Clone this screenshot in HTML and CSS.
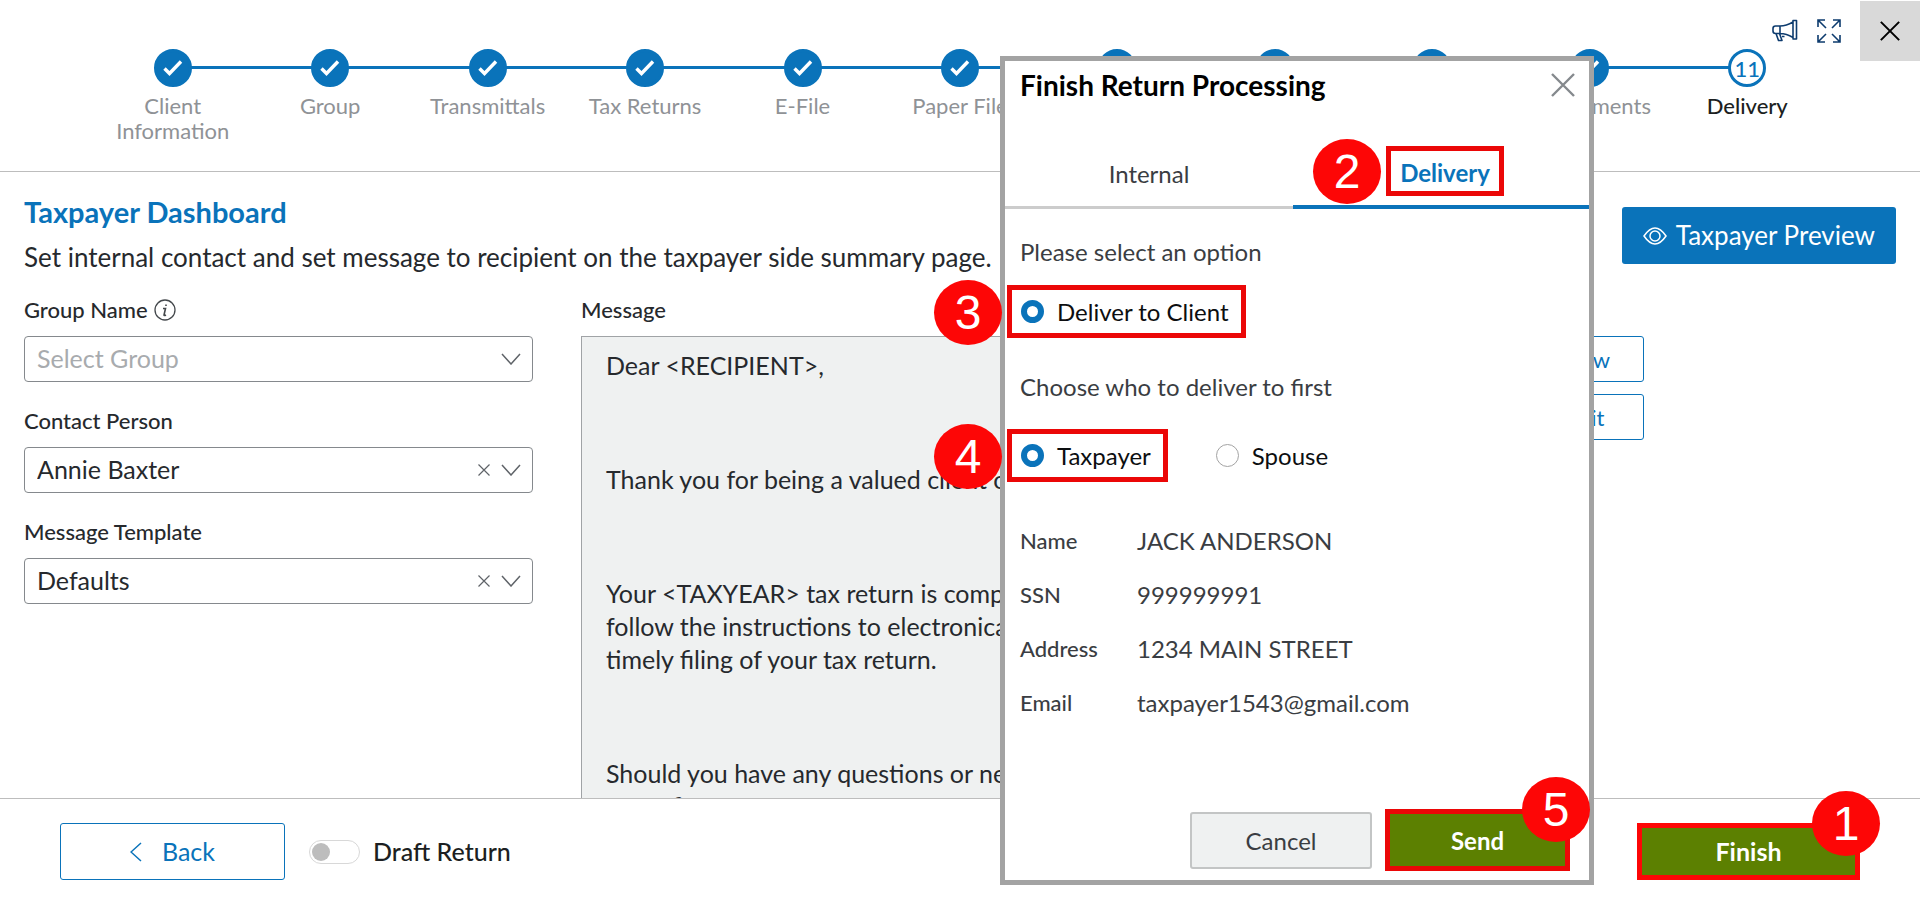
FILE: index.html
```
<!DOCTYPE html>
<html lang="en">
<head>
    <meta charset="UTF-8">
    <title>Delivery</title>
    <link rel="stylesheet" href="styles.css">
</head>
<body>
    <!-- shared icons -->
    <svg class="defs" width="0" height="0">
        <symbol id="check" viewBox="0 0 20 16"><path d="M1.500 8.500l5 5L18 1.500" fill="none" stroke="#fff" stroke-width="3.400"/></symbol>
        <symbol id="down" viewBox="0 0 20 12"><path d="M1 1l9 10 9-10" fill="none" stroke="#5f6368" stroke-width="1.5"/></symbol>
        <symbol id="cross" viewBox="0 0 24 24"><path d="M1 1l22 22M23 1L1 23" fill="none" stroke="currentColor" stroke-width="2.400"/></symbol>
    </svg>

    <header class="top">
        <ol class="steps">
            <li class="step"><span class="dot"><svg><use href="#check"/></svg></span><span class="name">Client Information</span></li>
            <li class="step"><span class="dot"><svg><use href="#check"/></svg></span><span class="name">Group</span></li>
            <li class="step"><span class="dot"><svg><use href="#check"/></svg></span><span class="name">Transmittals</span></li>
            <li class="step"><span class="dot"><svg><use href="#check"/></svg></span><span class="name">Tax Returns</span></li>
            <li class="step"><span class="dot"><svg><use href="#check"/></svg></span><span class="name">E-File</span></li>
            <li class="step"><span class="dot"><svg><use href="#check"/></svg></span><span class="name">Paper File</span></li>
            <li class="step"><span class="dot"><svg><use href="#check"/></svg></span></li>
            <li class="step"><span class="dot"><svg><use href="#check"/></svg></span></li>
            <li class="step"><span class="dot"><svg><use href="#check"/></svg></span></li>
            <li class="step"><span class="dot"><svg><use href="#check"/></svg></span><span class="name">Attachments</span></li>
            <li class="step current"><span class="dot">11</span><span class="name">Delivery</span></li>
        </ol>
        <div class="tools">
            <button class="tool" type="button" aria-label="Announcements">
                <svg width="26" height="24" viewBox="0 0 26 24" fill="none" stroke="#0d3b6e" stroke-width="1.6" stroke-linejoin="round">
                    <path d="M21 1.500h3.500v18.500H21zM21 3C16 6 13 7 8 7v7.500c5 0 8 1 13 4M8 7H3.500Q1 7 1 9.500v2.500Q1 14.500 3.500 14.500H8M4 14.500l2.500 7h3.500l-2.500-7M10 17.500h2.500"/>
                </svg>
            </button>
            <button class="tool" type="button" aria-label="Full screen">
                <svg width="24" height="24" viewBox="0 0 24 24" fill="none" stroke="#0d3b6e" stroke-width="1.6">
                    <path d="M1 8V1h7M1 1l8 8M16 1h7v7M23 1l-8 8M1 16v7h7M1 23l8-8M23 16v7h-7M23 23l-8-8"/>
                </svg>
            </button>
            <button class="exit" type="button" aria-label="Close"><svg width="20" height="20"><use href="#cross"/></svg></button>
        </div>
    </header>

    <main class="main">
        <div class="head">
            <div>
                <h1>Taxpayer Dashboard</h1>
                <p class="intro">Set internal contact and set message to recipient on the taxpayer side summary page.</p>
            </div>
            <button class="btn preview" type="button">
                <svg width="24" height="18" viewBox="0 0 24 18" fill="none" stroke="#fff" stroke-width="1.500"><path d="M1 9Q12-7 23 9Q12 25 1 9z"/><circle cx="12" cy="9" r="5"/></svg>
                Taxpayer Preview
            </button>
        </div>

        <div class="columns">
            <form class="fields">
                <div class="label-row">
                    <label for="group">Group Name</label>
                    <svg width="22" height="22" viewBox="0 0 22 22" fill="none" stroke="#44484c" stroke-width="1.300"><circle cx="11" cy="11" r="10"/><path d="M9 9.500h2.500L10 16q0 1 2 0M12 5.500v1.500" stroke-width="1.600"/></svg>
                </div>
                <div class="select">
                    <select id="group" class="empty"><option>Select Group</option></select>
                    <svg class="arrow"><use href="#down"/></svg>
                </div>
                <div class="label-row"><label for="contact">Contact Person</label></div>
                <div class="select">
                    <select id="contact"><option>Annie Baxter</option></select>
                    <button class="clear" type="button" aria-label="Clear contact"><svg width="12" height="12"><use href="#cross"/></svg></button>
                    <svg class="arrow"><use href="#down"/></svg>
                </div>
                <div class="label-row"><label for="template">Message Template</label></div>
                <div class="select">
                    <select id="template"><option>Defaults</option></select>
                    <button class="clear" type="button" aria-label="Clear template"><svg width="12" height="12"><use href="#cross"/></svg></button>
                    <svg class="arrow"><use href="#down"/></svg>
                </div>
            </form>

            <section class="message">
                <h2 class="label-row" id="msg">Message</h2>
                <div class="letter" role="document" aria-labelledby="msg">
                    <p>Dear &lt;RECIPIENT&gt;,</p>
                    <p>Thank you for being a valued client of our firm.</p>
                    <p>Your &lt;TAXYEAR&gt; tax return is complete. Please<br>
                    follow the instructions to electronically sign for<br>
                    timely filing of your tax return.</p>
                    <p>Should you have any questions or need help, call<br>
                    our office.</p>
                </div>
            </section>

            <div class="side">
                <button class="btn line small" type="button">View</button>
                <button class="btn line small" type="button">Edit</button>
            </div>
        </div>
    </main>

    <footer class="bottom">
        <button class="btn line back" type="button">
            <svg width="12" height="20" viewBox="0 0 12 20" fill="none" stroke="#0a73ba" stroke-width="1.500"><path d="M11 1L1 10l10 9"/></svg>
            Back
        </button>
        <label class="draft"><input type="checkbox" class="toggle">Draft Return</label>
        <div class="mark finish">
            <button class="btn green" type="button">Finish</button>
            <span class="badge corner">1</span>
        </div>
    </footer>

    <div class="modal" role="dialog" aria-labelledby="modal-title">
        <div class="modal-head">
            <h2 id="modal-title">Finish Return Processing</h2>
            <button class="close" type="button" aria-label="Close dialog"><svg width="24" height="24"><use href="#cross"/></svg></button>
        </div>
        <div class="tabs">
            <button class="tab" type="button">Internal</button>
            <button class="tab active" type="button"><span class="mark">Delivery<span class="badge">2</span></span></button>
        </div>

        <p class="ask">Please select an option</p>
        <div class="choices">
            <div class="mark"><label class="radio"><input type="radio" name="option" checked>Deliver to Client</label><span class="badge">3</span></div>
        </div>

        <p class="ask who">Choose who to deliver to first</p>
        <div class="choices">
            <div class="mark"><label class="radio"><input type="radio" name="who" checked>Taxpayer</label><span class="badge">4</span></div>
            <label class="radio"><input type="radio" name="who">Spouse</label>
        </div>

        <dl class="info">
            <dt>Name</dt><dd>JACK ANDERSON</dd>
            <dt>SSN</dt><dd>999999991</dd>
            <dt>Address</dt><dd>1234 MAIN STREET</dd>
            <dt>Email</dt><dd>taxpayer1543@gmail.com</dd>
        </dl>

        <div class="actions">
            <button class="btn cancel" type="button">Cancel</button>
            <div class="mark send">
                <button class="btn green" type="button">Send</button>
                <span class="badge corner">5</span>
            </div>
        </div>
    </div>
</body>
</html>
```
FILE: styles.css
```
* {
    box-sizing: border-box;
}
body {
    margin: 0;
    height: 100vh;
    display: flex;
    flex-direction: column;
    position: relative;
    background: #fff;
    color: #26292d;
    font-family: Lato, "Open Sans", sans-serif;
    font-size: 25px;
    line-height: 33px;
}
h1, h2, p, ol, dl, dd {
    margin: 0;
    padding: 0;
}
button, select {
    font: inherit;
    color: inherit;
    background: none;
    border: 0;
    padding: 0;
}
.defs {
    position: absolute;
}

/* progress bar */
.top {
    position: relative;
    padding: 49px 94px 28px;
    border-bottom: 1px solid #bdbdbd;
}
.steps {
    display: flex;
    list-style: none;
}
.step {
    flex: 1;
    min-height: 94px;
    position: relative;
    display: flex;
    flex-direction: column;
    align-items: center;
    gap: 6px;
    color: #8f9296;
    font-size: 22px;
    line-height: 25px;
    text-align: center;
}
.step + .step::before {
    content: "";
    position: absolute;
    top: 17px;
    right: 50%;
    width: 100%;
    height: 3px;
    background: #0a73ba;
}
.dot {
    position: relative;
    z-index: 1;
    width: 38px;
    height: 38px;
    border: 3px solid #0a73ba;
    border-radius: 50%;
    background: #0a73ba;
    display: flex;
    align-items: center;
    justify-content: center;
}
.dot svg {
    width: 20px;
    height: 16px;
}
.name {
    max-width: 140px;
}
.current {
    color: #1c1f22;
    font-weight: 500;
}
.current .dot {
    background: #fff;
    color: #0a73ba;
}
.tools {
    position: absolute;
    top: 1px;
    right: 0;
    display: flex;
    align-items: center;
    gap: 19px;
}
.tool, .exit, .close, .clear {
    display: flex;
    align-items: center;
    justify-content: center;
}
.exit {
    width: 60px;
    height: 60px;
    background: #d9d9d9;
    color: #000;
}

/* dashboard */
.main {
    flex: 1;
    min-height: 0;
    overflow: hidden;
    display: flex;
    flex-direction: column;
    padding: 23px 24px 0;
}
.head {
    display: flex;
    justify-content: space-between;
    align-items: flex-start;
    margin-bottom: 23px;
}
h1 {
    margin-bottom: 13px;
    color: #0a73ba;
    font-size: 29px;
    line-height: 33px;
}
.intro, .preview {
    font-size: 26px;
}
.btn {
    display: flex;
    align-items: center;
    justify-content: center;
    height: 57px;
    border-radius: 3px;
}
.preview {
    gap: 9px;
    margin-top: 12px;
    padding: 0 21px;
    background: #0a73ba;
    color: #fff;
}
.columns {
    flex: 1;
    min-height: 0;
    display: grid;
    grid-template-columns: 509px minmax(0, 922px) 117px;
    grid-template-rows: minmax(0, 1fr);
}
.label-row {
    display: flex;
    align-items: center;
    gap: 6px;
    height: 25px;
    margin-bottom: 14px;
    font-size: 22px;
    line-height: 25px;
    font-weight: 500;
}
.select {
    position: relative;
    margin-bottom: 26px;
}
.select select {
    appearance: none;
    display: block;
    width: 100%;
    height: 46px;
    padding: 0 12px 2px;
    border: 1px solid #85898d;
    border-radius: 4px;
}
.select .empty {
    color: #a8abae;
}
.arrow {
    position: absolute;
    top: 17px;
    right: 12px;
    width: 20px;
    height: 12px;
    pointer-events: none;
}
.clear {
    position: absolute;
    top: 17px;
    right: 43px;
    color: #5f6368;
}
.message {
    display: flex;
    flex-direction: column;
    min-height: 0;
    margin: 0 -24px 0 48px;
}
.letter {
    flex: 1;
    min-height: 0;
    overflow: hidden;
    padding: 12px 24px;
    border: 1px solid #a0a3a6;
    border-bottom: 0;
    background: #eff1f1;
}
.letter p {
    margin-bottom: 81px;
}
.side {
    display: flex;
    flex-direction: column;
    gap: 12px;
    padding-top: 39px;
    margin: 0 -72px 0 72px;
}
.line {
    border: 1px solid #0a73ba;
    color: #0a73ba;
}
.small {
    height: 46px;
    font-size: 22px;
}

/* footer bar */
.bottom {
    display: flex;
    align-items: center;
    padding: 24px 60px 22px;
    border-top: 1px solid #bdbdbd;
}
.back {
    gap: 20px;
    width: 225px;
}
.draft {
    display: flex;
    align-items: center;
    gap: 13px;
    margin-left: 24px;
    color: #1c1f22;
    font-weight: 500;
}
.toggle {
    appearance: none;
    display: flex;
    align-items: center;
    width: 51px;
    height: 24px;
    margin: 0;
    padding: 0 2px;
    border: 1px solid #d8d8d8;
    border-radius: 12px;
}
.toggle::before {
    content: "";
    width: 18px;
    height: 18px;
    border-radius: 50%;
    background: #bdbdbd;
}
.green {
    width: 100%;
    height: 100%;
    border-radius: 0;
    background: #5c8001;
    color: #fff;
    font-weight: 700;
}

/* numbered callouts */
.mark {
    position: relative;
    border: 5px solid #eb0707;
}
.badge {
    position: absolute;
    top: 50%;
    right: 100%;
    width: 68px;
    height: 65px;
    margin: -32px 10px 0 0;
    border-radius: 50%;
    background: #fd0606;
    color: #fff;
    font: 48px/65px "Liberation Sans", Arial, sans-serif;
    text-align: center;
}
.corner {
    top: -37px;
    right: -25px;
    margin: 0;
}
.finish {
    width: 223px;
    height: 57px;
    margin-left: auto;
    border-color: #fd0606;
}

/* finish dialog */
.modal {
    position: absolute;
    z-index: 2;
    top: 56px;
    right: 326px;
    width: 594px;
    padding-bottom: 9px;
    border: 5px solid #a3a3a3;
    background: #fff;
    color: #3a3d42;
    font-size: 24px;
}
.modal-head {
    display: flex;
    justify-content: space-between;
    align-items: center;
    padding: 9px 14px 0 15px;
    margin-bottom: 46px;
    color: #000;
}
.modal h2 {
    font-size: 28px;
    line-height: 30px;
}
.close {
    color: #85898d;
}
.tabs {
    display: flex;
}
.tab {
    flex: 1;
    height: 63px;
    padding-bottom: 5px;
    border-bottom: 3px solid #ccc;
}
.tab.active {
    padding: 0 0 9px 8px;
    border-bottom: 4px solid #0a73ba;
    color: #0a73ba;
    font-weight: 700;
}
.tab .mark {
    display: inline-block;
    height: 50px;
    padding: 0 9px;
    line-height: 44px;
}
.ask {
    margin: 26px 15px 17px;
}
.choices {
    display: flex;
    align-items: center;
    gap: 48px;
    padding-left: 2px;
}
.choices .mark {
    padding: 5px 12px 5px 9px;
}
.who {
    margin: 32px 15px 26px;
}
.radio {
    display: flex;
    align-items: center;
    gap: 13px;
    color: #0c0e10;
}
.radio input {
    appearance: none;
    width: 23px;
    height: 23px;
    margin: 0;
    border: 1px solid #a3a3a3;
    border-radius: 50%;
}
.radio input:checked {
    border: 6px solid #0a73ba;
}
.info {
    display: grid;
    grid-template-columns: 117px 1fr;
    row-gap: 21px;
    margin: 42px 15px 90px;
}
.info dt {
    font-size: 22px;
    font-weight: 500;
}
.actions {
    display: flex;
    align-items: center;
    justify-content: flex-end;
    gap: 13px;
    padding-right: 19px;
}
.cancel {
    width: 182px;
    border: 2px solid #c3c5c5;
    background: #eff1f1;
}
.send {
    width: 185px;
    height: 62px;
}
```
